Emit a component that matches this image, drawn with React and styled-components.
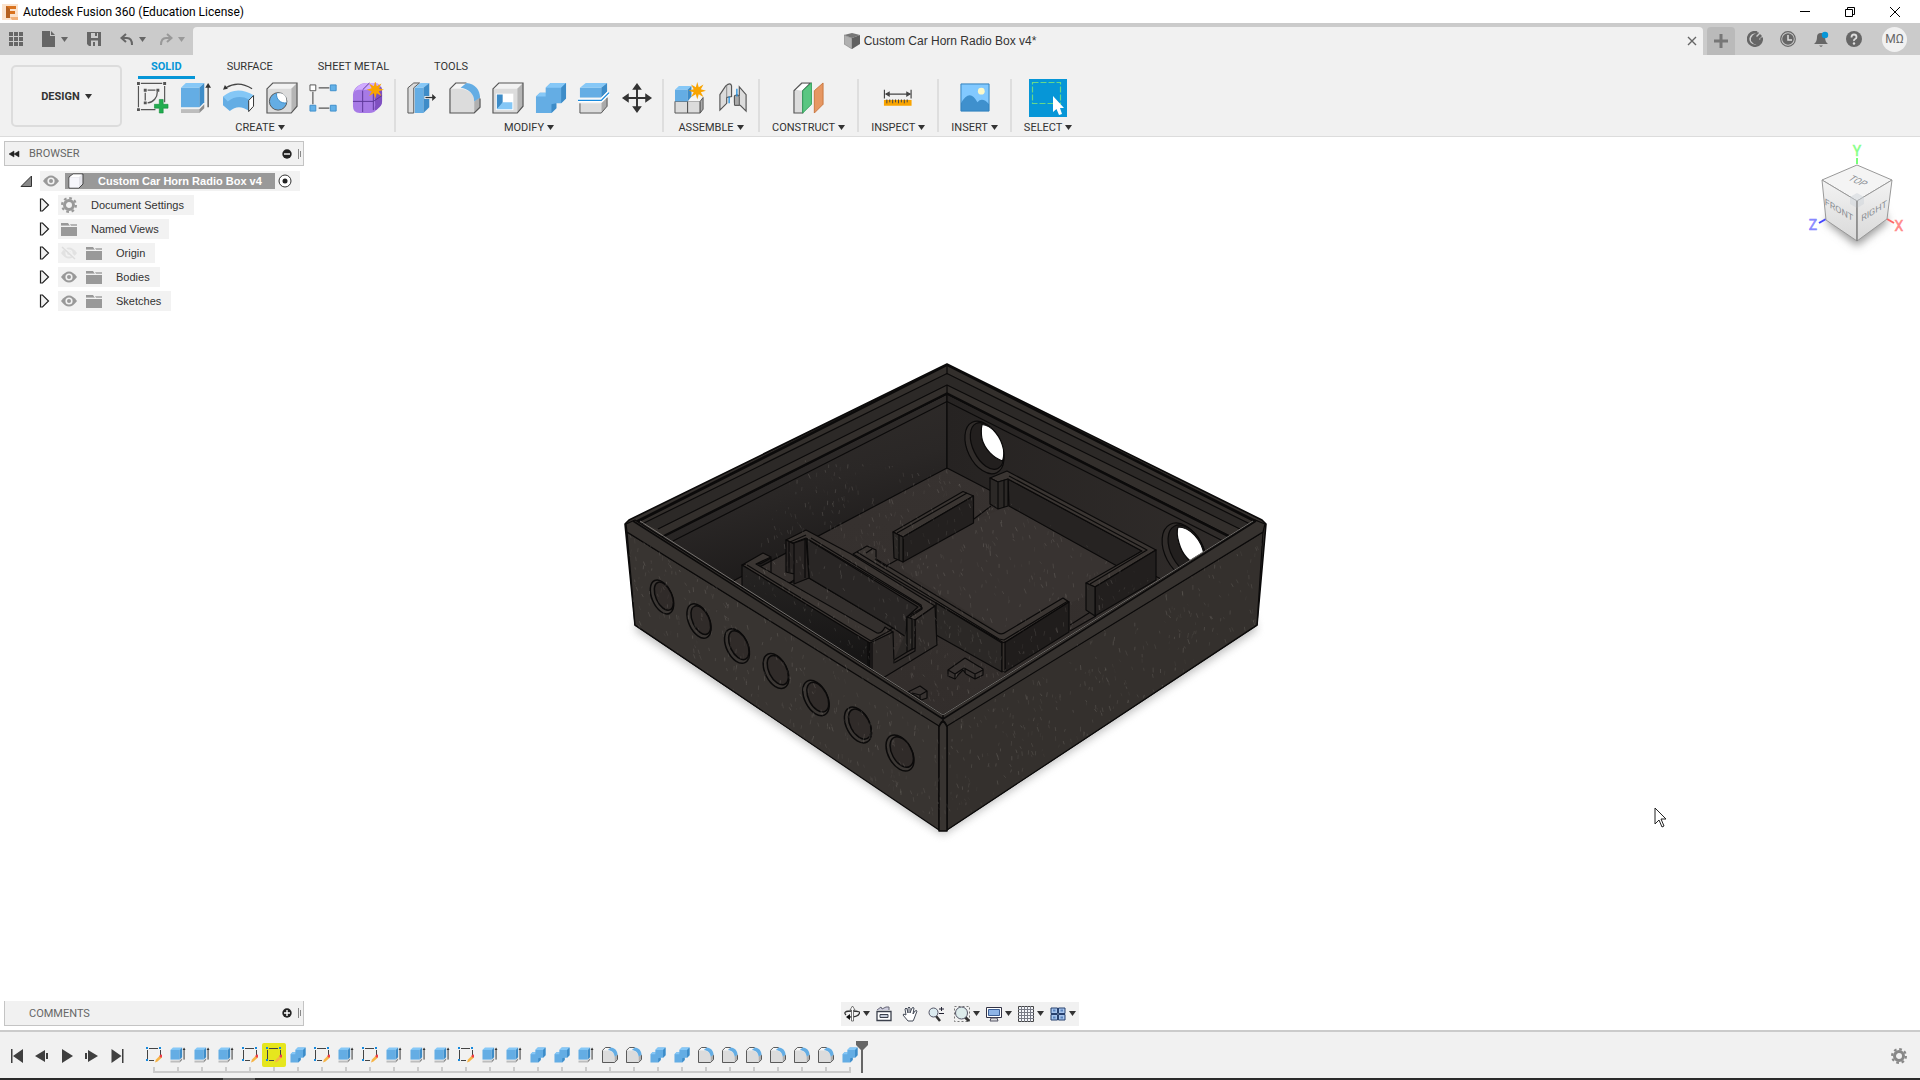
import React from 'react';
import styled, { createGlobalStyle } from 'styled-components';

const starPoints = (cx, cy, outer, inner, count) =>
  Array.from({ length: count * 2 }, (_, i) => {
    const r = i % 2 ? inner : outer;
    const a = (Math.PI * i) / count - Math.PI / 2;
    return `${(cx + r * Math.cos(a)).toFixed(1)},${(cy + r * Math.sin(a)).toFixed(1)}`;
  }).join(' ');

const Icon = ({ size = 32, box = 33, children }) => (
  <svg width={size} height={size} viewBox={`0 0 ${box} ${box}`} fill='none' aria-hidden='true'>
    {children}
  </svg>
);

const Caret = ({ color = '#333' }) => (
  <svg width='7' height='5' viewBox='0 0 7 5' aria-hidden='true'>
    <path d='M0 0h7L3.5 5z' fill={color} />
  </svg>
);

/* ---- ribbon icons ---- */

const SketchIcon = () => (
  <Icon>
    <path d='M4 1.5h22M1.5 4v22M28.5 4v17M4 28.5h15' stroke='#555' strokeWidth='1.2' />
    <path d='M11 8.5h8M8.5 11v8M21 10c0 6-4 11-10 11.5' stroke='#555' strokeWidth='1.3' />
    <path d='M0 0h3v3H0zM27 0h3v3h-3zM0 27h3v3H0zM7 7h3v3H7zM20 7h3v3h-3zM7 20h3v3H7z' fill='#555' />
    <path d='M23 18h4v5h5v4h-5v5h-4v-5h-5v-4h5z' fill='#21ad4f' stroke='#118a3a' strokeWidth='.6' />
  </Icon>
);

const ExtrudeIcon = ({ size }) => (
  <Icon size={size}>
    <path d='M1 6l5-5h19l-5 5z' fill='#86c8f7' />
    <path d='M1 6h19v20H1z' fill='#64ade4' />
    <path d='M20 6l5-5v20l-5 5z' fill='#3d8cc8' />
    <path d='M1 28h19v4H1z' fill='#bdbdbd' />
    <path d='M20 28l5-5v4l-5 5z' fill='#8d8d8d' />
    <path d='M29 4v22' stroke='#333' strokeWidth={size === 16 ? 2 : 1.2} />
    <path d='M29 1l3 5h-6z' fill='#333' />
  </Icon>
);

const RevolveIcon = () => (
  <Icon>
    <path d='M3 6Q16-2 30 7' stroke='#444' strokeWidth='1.2' />
    <path d='M0 8l2-5 3 4z' fill='#333' />
    <path d='M0 15Q14 3 32 14l-5 7Q15 14 5 23L0 15z' fill='#84c7f6' />
    <path d='M0 15l5 5q10-8 22-2v12q-11-8-20 0L0 24z' fill='#64ade4' />
    <path d='M26.5 19l5-5v11l-5 5.5z' fill='#fff' stroke='#333' />
  </Icon>
);

const BoxBody = () => (
  <>
    <path d='M1 7l6-6h25l-6 6z' fill='#f2f2f2' />
    <path d='M26 7l6-6v24l-6 7z' fill='#b5b5b5' />
    <path d='M1 7h25v25H1z' fill='#dcdcdc' />
    <path d='M1 7l6-6h25v24l-6 7H1z' stroke='#555' strokeWidth='1.2' />
  </>
);

const HoleIcon = () => (
  <Icon>
    <BoxBody />
    <circle cx='12.5' cy='20' r='9' fill='#64ade4' stroke='#555' />
    <path d='M11 11.5a8.6 8.6 0 0 0 10 10q1-9-6-10z' fill='#fff' />
    <path d='M11 11.5a8.6 8.6 0 0 0 10 10' stroke='#3d8cc8' />
  </Icon>
);

const PatternIcon = () => (
  <Icon>
    <path d='M10 6h11M4 10v13M10 27h11' stroke='#555' strokeWidth='1.2' />
    <path d='M1 3h6v6H1z' fill='#fff' stroke='#555' />
    <path d='M22 3h6v6h-6zM1 24h6v6H1zM22 24h6v6h-6z' fill='#64b1e8' stroke='#3f8fcb' />
  </Icon>
);

const FormIcon = () => (
  <Icon>
    <path d='M1 13Q1 8 6 4q4-3 8-3h8q9 0 9 9v10q0 4-4 7-4 5-9 5H8q-7 0-7-7z' fill='#a77ae6' />
    <path d='M2 11Q4 3 14 1h8q6 0 6 3-2 4-8 4H7q-4 0-5 3z' fill='#d0abff' />
    <path d='M23 10l7-5q1 2 1 5v10q0 4-5 8-4 3-2-4z' fill='#7f50c0' />
    <path d='M1 20h21l9-6M11 9v22M22 10v19M11 8l7-7' stroke='#5d3799' />
    <polygon points={starPoints(24, 8, 9, 4, 8)} fill='#f9a400' />
  </Icon>
);

const PressPullIcon = () => (
  <Icon>
    <path d='M2 6l6-5h6L8 6v26H2z' fill='#dcdcdc' stroke='#555' />
    <path d='M9 6l6-5h9l-6 5z' fill='#86c8f7' />
    <path d='M9 6h9v26H9z' fill='#64ade4' />
    <path d='M18 6l6-5v25l-6 6z' fill='#3d8cc8' />
    <path d='M19 16h9' stroke='#fff' strokeWidth='3' />
    <path d='M20 16h8' stroke='#333' strokeWidth='1.4' />
    <path d='M27 12.5l4 3.5-4 3.5z' fill='#333' />
  </Icon>
);

const FilletIcon = ({ size }) => (
  <Icon size={size}>
    <path d='M1 7l6-6h11l-6 6z' fill='#f6f6f6' />
    <path d='M1 7h11q14 2 14 13v12H1z' fill='#dcdcdc' />
    <path d='M26 20l6-6v12l-6 6z' fill='#b0b0b0' />
    <path d='M1 7l6-6h11M32 17v9l-6 6H1V7' stroke='#555' strokeWidth={size === 16 ? 2 : 1.2} />
    <path d='M12 6l6-5c9 1 14 7 14 15l-6 4C26 12 20 7 12 6z' fill='#64ade4' />
  </Icon>
);

const ShellIcon = () => (
  <Icon>
    <BoxBody />
    <path d='M4 12h18v17H4z' fill='#fff' />
    <path d='M5 13h6v10l-6 5z' fill='#3d8cc8' />
    <path d='M5 28l6-7h10v7z' fill='#84c7f6' />
  </Icon>
);

const CombineIcon = ({ size }) => (
  <Icon size={size}>
    <path d='M1 15l4-4h6V6l5-5h16v16l-5 5h-5v5l-5 5H1z' fill='#64ade4' />
    <path d='M1 15l4-4h6v4zM11 6l5-5h16l-5 5z' fill='#86c8f7' />
    <path d='M27 6l5-5v16l-5 5zM17 23l5-1v5l-5 5z' fill='#3d8cc8' />
  </Icon>
);

const SplitIcon = () => (
  <Icon>
    <path d='M2 6l6-5h22l-6 5z' fill='#86c8f7' />
    <path d='M2 6h22v10H2z' fill='#64ade4' />
    <path d='M24 6l6-5v9l-6 6z' fill='#3d8cc8' />
    <path d='M24 22l6-6v9l-6 7z' fill='#aaa' />
    <path d='M2 22h22v10H2z' fill='#dcdcdc' />
    <path d='M2 22v10h22l6-7v-9' stroke='#555' />
    <path d='M0 19h24l8-8' stroke='#fff' strokeWidth='4' />
    <path d='M0 19h24l8-8' stroke='#1689dd' strokeWidth='1.3' />
  </Icon>
);

const MoveIcon = () => (
  <Icon>
    <path d='M16.5 5v23M5 16.5h23' stroke='#333' strokeWidth='2' />
    <path d='M16.5 1l5 7h-10zM16.5 32l5-7h-10zM1 16.5l7-5v10zM32 16.5l-7-5v10z' fill='#333' />
  </Icon>
);

const ComponentIcon = () => (
  <Icon>
    <path d='M1 20h13v12H1zM14 20h13v12H14z' fill='#dcdcdc' stroke='#555' />
    <path d='M14 20l4-4h13l-4 4z' fill='#f6f6f6' />
    <path d='M27 20l3-4v12l-3 4z' fill='#aaa' stroke='#555' />
    <path d='M1 8l4-4h13l-4 4z' fill='#86c8f7' />
    <path d='M1 8h13v12H1z' fill='#64ade4' />
    <path d='M14 8l4-4v11l-4 5z' fill='#3d8cc8' />
    <polygon points={starPoints(24, 9, 9, 4, 8)} fill='#f9a400' />
  </Icon>
);

const JointIcon = () => (
  <Icon>
    <path d='M3 13l6-9q5-4 6 0v11l-5 1v6l-7 7z' fill='#dcdcdc' stroke='#555' strokeWidth='1.2' />
    <path d='M10 4v12' stroke='#888' />
    <path d='M12.5 15v7' stroke='#1689dd' strokeWidth='1.3' />
    <path d='M23 5l7 8v17l-6-6h-5q-1-1-1-3v-6q2-2 5-1z' fill='#dcdcdc' stroke='#555' strokeWidth='1.2' />
    <path d='M18 14q3-2 5 1v9h-5z' fill='#aaa' stroke='#555' />
    <path d='M20.5 7v8' stroke='#1689dd' strokeWidth='1.3' />
  </Icon>
);

const ConstructIcon = () => (
  <Icon>
    <path d='M1 9l8-8h9l-8 8v23H1z' fill='#dcdcdc' stroke='#555' strokeWidth='1.2' />
    <path d='M3 8l7-6h6l-7 7z' fill='#fff' />
    <path d='M10 9l9-8v22l-9 9z' fill='#5ac681' stroke='#33a35d' />
    <path d='M22 9l9-8v22l-9 9z' fill='#e69762' stroke='#c9773f' />
  </Icon>
);

const InspectIcon = () => (
  <Icon>
    <path d='M2.5 8v9M30 8v9M4 12.5h25' stroke='#444' strokeWidth='1.2' />
    <path d='M3 12.5l5-3v6zM30 12.5l-5-3v6z' fill='#444' />
    <path d='M2 18.5h28.5v6H2z' fill='#f9a400' />
    <path d='M5 18v4M8 18v3M11 18v4M14 18v3M17 18v4M20 18v3M23 18v4M26 18v3' stroke='#444' />
  </Icon>
);

const InsertIcon = () => (
  <Icon>
    <path d='M2 2h29v28H2z' fill='#82c9ff' />
    <circle cx='23' cy='9.5' r='3.5' fill='#fbf8c9' />
    <path d='M2 22q9-16 17-1 5-6 12 2v7H2z' fill='#3f90cd' />
    <path d='M2 2h29v28H2z' stroke='#2f80bd' />
  </Icon>
);

const SelectIcon = () => (
  <Icon size={38} box={38}>
    <path d='M3.5 3.5h28v21h-28z' stroke='#67d889' strokeDasharray='6 2' strokeWidth='1.2' />
    <path d='M24 17v16l3.5-3 2.5 6 3-1-2-6h4z' fill='#fff' />
  </Icon>
);

/* ---- header icons ---- */

const AppLogo = () => (
  <Icon size={16} box={16}>
    <path d='M0 0h16v16H0z' fill='#fbe3cd' />
    <path d='M4 2h10v3H8v2h5v3H8v4H4z' fill='#d9731f' />
    <path d='M4 2l4 3v9H4z' fill='#b5601f' />
    <path d='M8 13h8v3h-6z' fill='#f3b27a' />
  </Icon>
);

const GridIcon = () => (
  <Icon size={14} box={14}>
    <path
      d='M0 0h4v4H0zM5 0h4v4H5zM10 0h4v4h-4zM0 5h4v4H0zM5 5h4v4H5zM10 5h4v4h-4zM0 10h4v4H0zM5 10h4v4H5zM10 10h4v4h-4z'
      fill='#666'
    />
  </Icon>
);

const FileIcon = () => (
  <svg width='14' height='16' viewBox='0 0 14 16' aria-hidden='true'>
    <path d='M0 0h8v5h5v11H0zM9 0l4 4H9z' fill='#666' />
  </svg>
);

const SaveIcon = () => (
  <Icon size={14} box={14}>
    <path d='M0 0h14v14H2l-2-2z' fill='#666' />
    <path d='M4 1h7v5H4zM4 8.5h7V14H4z' fill='#cbcbcb' />
    <path d='M8 1h2v3H8zM6 10h2v4H6z' fill='#666' />
  </Icon>
);

const UndoIcon = ({ flip }) => (
  <Icon size={14} box={14}>
    <g transform={flip ? 'matrix(-1 0 0 1 14 0)' : undefined} stroke={flip ? '#999' : '#666'} strokeWidth='2'>
      <path d='M6 2L1.500 6 6 10M2 6h5q5 0 5 7' />
    </g>
  </Icon>
);

const DocCube = () => (
  <Icon size={16} box={16}>
    <path d='M0 2l8-2 8 2-8 3z' fill='#777' />
    <path d='M0 2l8 3v11l-8-5z' fill='#b0b0b0' stroke='#777' strokeWidth='.5' />
    <path d='M8 5l8-3v9l-8 5z' fill='#606060' />
  </Icon>
);

const ExtensionIcon = () => (
  <Icon size={16} box={16}>
    <path d='M10 1.500a6.800 6.800 0 1 0 4.500 5' stroke='#666' strokeWidth='2.6' />
    <path d='M4 10V7l2-3 5-3 1 1-3 3 1 1 3-3 2 2-3 3 1 1 3-2v2l-4 4H7z' fill='#666' />
  </Icon>
);

const ClockIcon = () => (
  <Icon size={16} box={16}>
    <circle cx='8' cy='8' r='7.3' stroke='#666' strokeWidth='1.2' />
    <circle cx='8' cy='8' r='5.8' fill='#666' />
    <path d='M8 4v5h4' stroke='#ddd' strokeWidth='1.5' />
  </Icon>
);

const BellIcon = () => (
  <Icon size={16} box={16}>
    <path d='M1 13q3-2 3-7 0-4 4-4t4 4q0 5 3 7zM6 14.500h4L8 16z' fill='#666' />
    <circle cx='12' cy='4' r='3.2' fill='#0696d7' />
  </Icon>
);

const HelpIcon = () => (
  <Icon size={16} box={16}>
    <circle cx='8' cy='8' r='8' fill='#666' />
    <path d='M5.500 6.500q0-3 2.500-3t2.500 2.500q0 1.300-1.400 2T8 10' stroke='#ddd' strokeWidth='1.8' />
    <circle cx='8' cy='12.5' r='1.2' fill='#ddd' />
  </Icon>
);

/* ---- browser tree icons ---- */

const Eye = ({ off }) => (
  <Icon size={16} box={16}>
    <path d='M0 8q8-11 16 0-8 11-16 0z' fill={off ? '#e2e2e2' : '#999'} />
    <circle cx='8' cy='8' r='3.6' fill='#f2f2f2' />
    <circle cx='8' cy='8' r='2' fill={off ? '#e2e2e2' : '#999'} />
    {off && <path d='M2 2l13 12' stroke='#f2f2f2' strokeWidth='3' />}
    {off && <path d='M1 2l13 12' stroke='#ddd' strokeWidth='1.5' />}
  </Icon>
);

const Folder = () => (
  <Icon size={16} box={16}>
    <path d='M0 2h7l2 3H0zM0 6h16v9H0z' fill='#999' />
    <path d='M9 3h7v2h-6z' fill='#b5b5b5' />
    <path d='M0 5h9' stroke='#f2f2f2' strokeWidth='.8' />
  </Icon>
);

const Gear = ({ color = '#999' }) => (
  <Icon size={16} box={16}>
    <circle cx='8' cy='8' r='4.5' stroke={color} strokeWidth='3' />
    <circle cx='8' cy='8' r='6.9' stroke={color} strokeWidth='2.2' strokeDasharray='2.7 2.719' />
  </Icon>
);

const Expander = () => (
  <Icon size={14} box={14}>
    <path d='M1.5 1h2l6 6-6 6h-2z' fill='#f1f1f1' stroke='#222' strokeWidth='1.2' />
  </Icon>
);

const RootExpander = () => (
  <Icon size={12} box={12}>
    <path d='M1 11.5L11.5 1v10.5z' fill='#888' stroke='#333' />
  </Icon>
);

const BodyCube = () => (
  <Icon size={16} box={16}>
    <path d='M1 4l4-3h10v10l-4 4H1z' fill='#e4e4ea' stroke='#444' />
    <path d='M1.5 4.5H11v10H1.500z' fill='#f6f6fb' />
    <path d='M2 4l3-2.500h9L11 4z' fill='#fff' />
  </Icon>
);

const RadioDot = () => (
  <Icon size={14} box={14}>
    <circle cx='7' cy='7' r='6' fill='#fff' stroke='#333' />
    <circle cx='7' cy='7' r='2.5' fill='#222' />
  </Icon>
);

const Grip = () => (
  <Icon size={10} box={10}>
    <path d='M6.5 0v10M8.5 2v6' stroke='#888' />
  </Icon>
);

const Toggle = ({ plus }) => (
  <Icon size={10} box={10}>
    <circle cx='5' cy='5' r='4.7' fill='#222' />
    <path d={plus ? 'M2 5h6M5 2v6' : 'M2 5h6'} stroke='#fff' strokeWidth='1.4' />
  </Icon>
);

/* ---- navigation bar icons ---- */

const OrbitIcon = () => (
  <Icon size={16} box={16}>
    <path d='M2 9Q-2 5 8 5t7 3q-1 3-10 3' stroke='#333' strokeWidth='1.3' />
    <path d='M2 11l4-3v6z' fill='#111' />
    <path d='M7.500 15V4H6l2.500-4L11 4H9.500v11z' fill='#fff' stroke='#555' strokeWidth='.8' />
  </Icon>
);

const LookAtIcon = () => (
  <Icon size={16} box={16}>
    <path d='M1 5.500h14v9H1z' fill='#fff' stroke='#3b404c' strokeWidth='1.3' />
    <path d='M4 8.500h8v3H4z' fill='#c3cad6' stroke='#3b404c' />
    <path d='M1 4l4-3 1 2 4-2 3 0v3' stroke='#667' fill='#ccd' />
  </Icon>
);

const PanIcon = () => (
  <Icon size={16} box={16}>
    <path
      d='M6 15L1 9q0-2 3 0L3 3q1-2 2 0l1 4V2q1-2 2 0v5l2-5q1-1 2 0l-1 6 2-3q2-1 2 0l-3 8-1 2z'
      fill='#fff'
      stroke='#454b58'
    />
  </Icon>
);

const ZoomIcon = () => (
  <Icon size={16} box={16}>
    <path d='M8 10l4 5' stroke='#333' strokeWidth='2.5' />
    <circle cx='5.5' cy='6.5' r='4.5' fill='#dcebf0' stroke='#556' />
    <path d='M11 3h5M13.500 1v4M11 7.500h5' stroke='#223' />
  </Icon>
);

const FitIcon = () => (
  <Icon size={16} box={16}>
    <path d='M.5.5h15v15H.5z' stroke='#777' strokeDasharray='2 2' />
    <path d='M11 11l4 4' stroke='#333' strokeWidth='3' />
    <circle cx='7.5' cy='7' r='6' fill='#dcebeb' stroke='#556' />
  </Icon>
);

const DisplayIcon = () => (
  <Icon size={16} box={16}>
    <path d='M.5 1.500h15v10H.5z' fill='#fff' stroke='#334' />
    <path d='M2.500 3.500h11v6h-11z' fill='#8eb4e6' stroke='#3c5f96' />
    <path d='M5 12h6l1 3H4z' fill='#ddd' stroke='#556' />
  </Icon>
);

const GridsIcon = () => (
  <Icon size={16} box={16}>
    <path d='M.5.5h15v15H.5z' fill='#f4f6fa' stroke='#444' />
    <path d='M3.500 0v16M6.500 0v16M9.500 0v16M12.500 0v16M0 3.500h16M0 6.500h16M0 9.500h16M0 12.500h16' stroke='#777a85' />
  </Icon>
);

const ViewportsIcon = () => (
  <Icon size={16} box={16}>
    <path d='M1 2h6.500v5.500H1zM8.500 2H15v5.500H8.500zM1 8.500h6.500V14H1zM8.500 8.500H15V14H8.500z' fill='#a9c6ee' stroke='#27406e' />
    <path d='M3 4.500h2.500M10.500 4.500H13M3 11.500h2.500M10.500 11.500H13' stroke='#5b83bd' strokeWidth='2' />
  </Icon>
);

/* ---- timeline icons ---- */

const SketchStep = () => (
  <Icon size={16} box={16}>
    <path d='M3 1.500h9M1.500 3v9M14.500 3v5M3 13.500h5' stroke='#444' />
    <path d='M0 0h2v2H0zM13 0h2v2h-2zM0 12h2v2H0z' fill='#1689dd' />
    <path d='M9 15.500l1-3 4-4 2 2-4.500 4z' fill='#f7b445' />
    <circle cx='15' cy='9' r='1.5' fill='#ef3d4a' />
  </Icon>
);

const stepIcons = {
  sketch: () => <SketchStep />,
  extrude: () => <ExtrudeIcon size={16} />,
  combine: () => <CombineIcon size={16} />,
  fillet: () => <FilletIcon size={16} />
};

const steps =
  'sketch extrude extrude extrude sketch sketch combine sketch extrude sketch extrude extrude extrude sketch extrude extrude combine combine extrude fillet fillet combine combine fillet fillet fillet fillet fillet fillet combine'.split(
    ' '
  );

const playIcons = [
  ['Go to start', 'M2 1v14h1.500V1zM14 1v14L4 8z'],
  ['Step back', 'M11 2v12L1 8zM12 5h2v6h-2z'],
  ['Play', 'M3 1l11 7-11 7z'],
  ['Step forward', 'M4 2v12l10-6zM1 5h2v6H1z'],
  ['Go to end', 'M13 1v14h1.500V1zM2.500 1v14l10-7z']
];

/* ---- model ---- */

const frontHoles = [
  [662, 597],
  [699, 621],
  [737, 646],
  [776, 671],
  [816, 698],
  [858, 725],
  [900, 753]
];

// fixed seed, so the grain stays the same between renders
const grain = (count, seed) => {
  let s = seed;
  const next = () => {
    s = (s * 16807) % 2147483647;
    return s / 2147483647;
  };
  return Array.from({ length: count }, () => [
    625 + next() * 640,
    400 + next() * 430,
    next() * 3 - 1,
    2 + next() * 3,
    0.04 + next() * 0.2
  ]);
};

const Model = () => (
  <g strokeLinejoin='round' stroke='#0b0a0a' strokeWidth='1.2'>
    <defs>
      <linearGradient id='wallLeft' x1='0' y1='0' x2='.35' y2='1'>
        <stop offset='0' stopColor='#36322f' />
        <stop offset='.6' stopColor='#2a2726' />
        <stop offset='1' stopColor='#181616' />
      </linearGradient>
      <linearGradient id='wallRight' x1='0' y1='0' x2='1' y2='0'>
        <stop offset='0' stopColor='#262322' />
        <stop offset='1' stopColor='#312d2b' />
      </linearGradient>
      <linearGradient id='floor' x1='0' y1='0' x2='0' y2='1'>
        <stop offset='0' stopColor='#373230' />
        <stop offset='1' stopColor='#322d2b' />
      </linearGradient>
      <linearGradient id='dark' x1='0' y1='0' x2='0' y2='1'>
        <stop offset='0' stopColor='#262423' />
        <stop offset='1' stopColor='#121111' />
      </linearGradient>
      <filter id='shadow' x='-10%' y='-10%' width='120%' height='120%'>
        <feGaussianBlur stdDeviation='4' />
      </filter>
      <clipPath id='inside'>
        <path d='M635 521L947 364l311 157L943 714z' />
      </clipPath>
      <clipPath id='shell'>
        <path d='M627 532L940 722h8l315-190-7 93-311 204L635 626zM800 460l150 10 200 110-206 130-200-130z' />
      </clipPath>
    </defs>

    <path d='M635 630L943 835l314-205-20-60H650z' fill='#888' stroke='none' opacity='.55' filter='url(#shadow)' />
    <path d='M625 524l4-4L947 364l315 156 4 4-9 101-311 205h-5L635 625z' fill='#36322f' strokeWidth='1.6' />

    <g clipPath='url(#inside)'>
      <path d='M947 467L640 628l303 110 320-110z' fill='url(#floor)' />
      <path d='M947 364v104L735 580l-60 40-45-100z' fill='url(#wallLeft)' />
      <path d='M947 364v104l210 109 40 20 65-76z' fill='url(#wallRight)' />
      <path d='M947 364L630 522l32 15 285-143zM947 364l316 158-33 14-283-142z' fill='#332f2c' />
      <path d='M947 374L642 524l16 5 289-144zM947 374l303 150-10 4-293-143z' fill='#2c2927' stroke='none' />
      <g fill='none'>
        <path d='M635 522l312-158 311 158' strokeWidth='4' />
        <path d='M642 524l305-150.500L1250 524M658 529l289-144 293 144M673 541l274-139.500L1223 541' />
        <path d='M662 537l285-143.500L1230 537' strokeWidth='2.5' />
      </g>

      <g>
        <ellipse cx='984.5' cy='447.5' rx='17' ry='28' transform='rotate(-26 984.5 447.5)' fill='#302c2a' />
        <ellipse cx='987' cy='446' rx='14' ry='25' transform='rotate(-26 987 446)' fill='#221f1e' />
        <path d='M982 424.500c10 1 19 12 21.500 25 .5 5 0 9-1 11.500-9-3-18-12-20.500-22-1-6-1-10 0-14.500z' fill='#fff' />
        <ellipse cx='1184' cy='551' rx='19' ry='30' transform='rotate(-28 1184 551)' fill='#302c2a' />
        <ellipse cx='1187' cy='550' rx='16' ry='27' transform='rotate(-28 1187 550)' fill='#221f1e' />
        <path d='M1178 527c12 0 24 13 26 28l-3 12q-17-6-22-24-3-10-1-16z' fill='#fff' />
      </g>

      {/* big tray */}
      <g>
        <path d='M1008 506l120 62-42 28-84 38-103-66 80-50z' fill='#383331' stroke='none' />
        <path d='M886 566l18-10M974 519l17-13M1070 625l22-14M1070 631l26-15' fill='none' />
        <path d='M1008 479l134 72-25 15-108-60z' fill='#262322' />
        <path d='M990 478l17-7 149 79-61 37-9-4 56-32-134-72-10 3z' fill='#3a3532' />
        <path d='M990 478l8 4v27l-8-5zM998 482l10-3v27l-10 3z' fill='#2b2826' />
        <path d='M1004 480v27' />
        <path d='M1095 587l61-37v30l-61 36z' fill='#221f1e' />
        <path d='M1086 583l9 4v29l-9-6z' fill='#2c2927' />
        <path d='M1009 476l138 74-57 34' fill='none' />
        <path d='M893 532l70-40.500 10.500 4.500L903 537z' fill='#3a3532' />
        <path d='M903 537l70.500-41v27L903 562z' fill='#23201f' />
        <path d='M893 532l10 5v25l-9-4z' fill='#2b2826' />
        <path d='M899 535v25M897 533l70-40' />
        <path d='M853 554l14-8 9 4v9l122 74q4 2 8-1l57-34 6 4-65 41z' fill='#3a3532' />
        <path d='M857 552l13 8 129 79 5 1 64-39M866 553l6-4M887 567l-12-8' fill='none' />
        <path d='M936 603l66 40v29l-66-37z' fill='#2b2826' />
        <path d='M1004 643l65-41v30l-64 40z' fill='#201d1c' />
        <path d='M1002 643l3-1v30l-3-1z' fill='#342f2c' />
      </g>

      {/* narrow tray */}
      <g>
        <path d='M809 578l84 50-23 14-85-58z' fill='#332f2d' />
        <path d='M807 539l111 68-11 10-1 20-13-9-84-50z' fill='#292625' />
        <path d='M786 540l20-10 45 24 84 52-20 14-8-3 15-9-3-3-113-67-13 5z' fill='#3a3532' />
        <path d='M811 538l110 67 1 4-12 8M790 542l16-7' fill='none' />
        <path d='M786 540l8 4v30l-8-2zM794 543l12-4 3 39-15 6z' fill='#282423' />
        <path d='M789 542v30M805 540v38M778 578l10 6 6-4M757 562q2 3 5 1l9-5v16' fill='none' />
        <path d='M742 565l21-12 8 4-15 7 121 69q5 1 8-6l8 5-23 12z' fill='#3a3532' />
        <path d='M747 565l124 76 20-11M742 565l4-1' fill='none' />
        <path d='M742 565l128 78v40L742 600z' fill='url(#dark)' />
        <path d='M870 643l23-11 1 31 21-12v-31l20-14 2 39-54 33-13 12z' fill='#302c2a' />
        <path d='M907 617l8 3v28l-8 4zM872 643v34M868 642v32M912 619v30l-18 11' fill='#2b2826' />
      </g>

      <path d='M948 670l17-12 18 11v6l-8 4-9-5-3-4-4 4-4 5-7-3z' fill='#383331' />
      <path d='M948 670l7 4 9-6 11 6 8-4M955 674v5M975 674v5M965 668v5' fill='none' />
      <path d='M908 692l12-6 7 5v7l-6 2-5-4z' fill='#383331' />
      <path d='M920 700v-5l7-4M912 693l8 2' fill='none' />
    </g>

    {/* outer faces */}
    <path d='M627 532l312 193v105L635 625z' fill='#383431' />
    <path d='M947 725l316-193-6 93-310 205z' fill='#34302d' />
    <path d='M939 727q4-10 8 0v104h-8z' fill='#383431' strokeWidth='1.5' />
    <path d='M626 524l9-4 308 195 312-195 10 4-2 8-316 194q-4-10-8 0L627 532z' fill='#36322f' />
    <path d='M640 521l303 194 310-194' fill='none' stroke='#8a8783' strokeWidth='.8' />
    <path d='M633 521l310 198 313-198M943 715v7' fill='none' strokeWidth='1.5' />

    {frontHoles.map(([x, y], i) => {
      const rx = 10 + i * 0.3;
      const ry = 18 + i * 0.25;
      return (
        <g key={x} transform={`rotate(${-24 - i * 0.8} ${x} ${y})`} strokeWidth='1.5'>
          <ellipse cx={x} cy={y} rx={rx} ry={ry} fill='#3b3734' />
          <ellipse cx={x + 2} cy={y} rx={rx - 2} ry={ry - 3} fill='#302b29' />
        </g>
      );
    })}

    <g clipPath='url(#shell)' stroke='#bdb7b0' strokeWidth='.8'>
      {grain(2800, 77).map(([x, y, dx, dy, o], i) => (
        <path key={i} d={`M${x.toFixed(1)} ${y.toFixed(1)}l${dx.toFixed(1)} ${dy.toFixed(1)}`} opacity={o.toFixed(2)} />
      ))}
    </g>
  </g>
);

const ViewCube = () => (
  <CubeSvg viewBox='1805 141 110 115' role='img' aria-label='View cube'>
    <defs>
      <filter id='cubeShadow' x='-30%' y='-30%' width='160%' height='160%'>
        <feGaussianBlur stdDeviation='4' />
      </filter>
      <linearGradient id='cubeFace' x1='0' y1='0' x2='0' y2='1'>
        <stop offset='0' stopColor='#f3f3f3' />
        <stop offset='1' stopColor='#d9d9d9' />
      </linearGradient>
    </defs>
    <path d='M1826 222l31 24 31-24-10-20h-40z' fill='#999' filter='url(#cubeShadow)' />
    <path d='M1857 164v-6' stroke='#7f7' strokeWidth='2' />
    <path d='M1826 219l-7 4' stroke='#44f' strokeWidth='2' />
    <path d='M1887 219l7 4' stroke='#f66' strokeWidth='2' />
    <g stroke='#999' strokeWidth='1'>
      <path d='M1857 165l35 15-35 21-35-21z' fill='#f4f4f4' />
      <path d='M1822 180l35 21v40l-31-21z' fill='url(#cubeFace)' />
      <path d='M1892 180l-35 21v40l30-22z' fill='url(#cubeFace)' />
    </g>
    <path d='M1850 197l7-4 7 4v7l-7 4-7-4z' fill='#cdd3da' opacity='.5' />
    <path d='M1857 201v40' stroke='#777' />
    <g fill='#8b8f94' fontFamily='Roboto, sans-serif' fontSize='9' textAnchor='middle'>
      <text transform='translate(1839 213) skewY(31)'>FRONT</text>
      <text transform='translate(1874 214) skewY(-31)'>RIGHT</text>
      <text transform='translate(1855 183) rotate(24) skewX(-30)'>TOP</text>
    </g>
    <g fontFamily='Roboto, sans-serif' fontSize='14' textAnchor='middle' strokeWidth='.5'>
      <text x='1857' y='156' fill='#8f8' stroke='#8f8'>Y</text>
      <text x='1813' y='230' fill='#88f' stroke='#88f'>Z</text>
      <text x='1899' y='231' fill='#f88' stroke='#f88'>X</text>
    </g>
  </CubeSvg>
);

/* ---- page data ---- */

const panels = [
  { name: 'CREATE', icons: [['Create sketch', SketchIcon], ['Extrude', ExtrudeIcon], ['Revolve', RevolveIcon], ['Hole', HoleIcon], ['Pattern', PatternIcon], ['Create form', FormIcon]] },
  { name: 'MODIFY', icons: [['Press pull', PressPullIcon], ['Fillet', FilletIcon], ['Shell', ShellIcon], ['Combine', CombineIcon], ['Split body', SplitIcon], ['Move', MoveIcon]] },
  { name: 'ASSEMBLE', icons: [['New component', ComponentIcon], ['Joint', JointIcon]] },
  { name: 'CONSTRUCT', icons: [['Offset plane', ConstructIcon]] },
  { name: 'INSPECT', icons: [['Measure', InspectIcon]] },
  { name: 'INSERT', icons: [['Canvas', InsertIcon]] },
  { name: 'SELECT', icons: [['Select', SelectIcon]], active: true }
];

const tree = [
  { label: 'Document Settings', gear: true },
  { label: 'Named Views' },
  { label: 'Origin', eye: 'off' },
  { label: 'Bodies', eye: 'on' },
  { label: 'Sketches', eye: 'on' }
];

const navTools = [
  ['Orbit', OrbitIcon, true],
  ['Look at', LookAtIcon],
  ['Pan', PanIcon],
  ['Zoom', ZoomIcon],
  ['Fit', FitIcon, true],
  ['Display settings', DisplayIcon, true],
  ['Grid and snaps', GridsIcon, true],
  ['Viewports', ViewportsIcon, true]
];

const App = () => {
  return (
    <Page>
      <GlobalStyle />

      <TitleBar>
        <AppLogo />
        <AppTitle>Autodesk Fusion 360 (Education License)</AppTitle>

        <WindowButton aria-label='Minimize'>
          <Icon size={12} box={12}>
            <path d='M1 5.500h10' stroke='#000' />
          </Icon>
        </WindowButton>
        <WindowButton aria-label='Restore'>
          <Icon size={12} box={12}>
            <path d='M1.500 3.500h7v7h-7zM3.500 3.500v-2h7v7h-2' stroke='#000' />
          </Icon>
        </WindowButton>
        <WindowButton aria-label='Close'>
          <Icon size={12} box={12}>
            <path d='M1 1l10 10M11 1L1 11' stroke='#000' />
          </Icon>
        </WindowButton>
      </TitleBar>

      <TabBar>
        <QuickTools>
          <ToolButton aria-label='Data panel'>
            <GridIcon />
          </ToolButton>
          <ToolButton aria-label='File'>
            <FileIcon />
            <Caret color='#666' />
          </ToolButton>
          <ToolButton aria-label='Save'>
            <SaveIcon />
          </ToolButton>
          <History>
            <ToolButton aria-label='Undo'>
              <UndoIcon />
              <Caret color='#666' />
            </ToolButton>
            <ToolButton aria-label='Redo'>
              <UndoIcon flip />
              <Caret color='#999' />
            </ToolButton>
          </History>
        </QuickTools>

        <DocumentTab>
          <DocumentTitle>
            <DocCube />
            Custom Car Horn Radio Box v4*
          </DocumentTitle>
          <ToolButton aria-label='Close tab'>
            <Icon size={10} box={10}>
              <path d='M1 1l8 8M9 1L1 9' stroke='#666' strokeWidth='1.4' />
            </Icon>
          </ToolButton>
        </DocumentTab>

        <NewTab aria-label='New tab'>
          <Icon size={14} box={14}>
            <path d='M7 0v14M0 7h14' stroke='#777' strokeWidth='3' />
          </Icon>
        </NewTab>

        <Account>
          <ToolButton aria-label='Extensions'>
            <ExtensionIcon />
          </ToolButton>
          <ToolButton aria-label='Job status'>
            <ClockIcon />
          </ToolButton>
          <ToolButton aria-label='Notifications'>
            <BellIcon />
          </ToolButton>
          <ToolButton aria-label='Help'>
            <HelpIcon />
          </ToolButton>
          <Avatar>MΩ</Avatar>
        </Account>
      </TabBar>

      <Ribbon>
        <Workspace>
          DESIGN <Caret />
        </Workspace>

        <RibbonMain>
          <RibbonTabs>
            <RibbonTab $active>SOLID</RibbonTab>
            <RibbonTab>SURFACE</RibbonTab>
            <RibbonTab>SHEET METAL</RibbonTab>
            <RibbonTab>TOOLS</RibbonTab>
          </RibbonTabs>

          <Panels>
            {panels.map(({ name, icons, active }) => (
              <Panel key={name}>
                <PanelIcons>
                  {icons.map(([label, Glyph]) => (
                    <RibbonButton key={label} aria-label={label} $active={active}>
                      <Glyph />
                    </RibbonButton>
                  ))}
                </PanelIcons>
                <PanelLabel>
                  {name} <Caret />
                </PanelLabel>
              </Panel>
            ))}
          </Panels>
        </RibbonMain>
      </Ribbon>

      <Canvas>
        <Scene viewBox='0 137 1920 893' role='img' aria-label='Custom Car Horn Radio Box'>
          <Model />
          <path d='M1655 808v16l4-4 3 7 2-1-3-7h5z' fill='#fff' stroke='#222' />
        </Scene>

        <CanvasTop>
          <Browser>
            <PanelHeader>
              <Icon size={12} box={12}>
                <path d='M6 3v6L1 6zM11 3v6L6 6z' fill='#222' stroke='#222' strokeWidth='.5' />
              </Icon>
              <PanelTitle>BROWSER</PanelTitle>
              <Toggle />
              <Grip />
            </PanelHeader>

            <Tree>
              <RootRow>
                <RootExpander />
                <RootFill>
                  <Eye />
                  <RootName>
                    <BodyCube />
                    Custom Car Horn Radio Box v4
                  </RootName>
                  <RadioDot />
                </RootFill>
              </RootRow>
              {tree.map(({ label, gear, eye }) => (
                <TreeRow key={label}>
                  <Expander />
                  <TreeFill>
                    {eye && <Eye off={eye === 'off'} />}
                    {gear ? <Gear /> : <Folder />}
                    <TreeName>{label}</TreeName>
                  </TreeFill>
                </TreeRow>
              ))}
            </Tree>
          </Browser>

          <ViewCube />
        </CanvasTop>

        <CanvasBottom>
          <Comments>
            <PanelTitle>COMMENTS</PanelTitle>
            <Toggle plus />
            <Grip />
          </Comments>

          <NavBar>
            {navTools.map(([label, Glyph, menu]) => (
              <NavButton key={label} aria-label={label} $menu={menu}>
                <Glyph />
                {menu && <Caret />}
              </NavButton>
            ))}
          </NavBar>
        </CanvasBottom>
      </Canvas>

      <Timeline>
        <Playback>
          {playIcons.map(([label, d]) => (
            <PlayButton key={label} aria-label={label}>
              <Icon size={16} box={16}>
                <path d={d} fill='#3f3f3f' />
              </Icon>
            </PlayButton>
          ))}
        </Playback>

        <Steps>
          {steps.map((step, i) => (
            <Step key={i}>
              <StepButton aria-label={step} $selected={i === 5}>
                {stepIcons[step]()}
              </StepButton>
            </Step>
          ))}
        </Steps>
        <Marker viewBox='0 0 12 32' aria-hidden='true'>
          <path d='M0 0h12v4L7 9v23H5V9L0 4z' fill='#666' />
        </Marker>

        <Settings aria-label='Timeline settings'>
          <Gear color='#888' />
        </Settings>
      </Timeline>

      <Taskbar>
        <TaskbarItem />
      </Taskbar>
    </Page>
  );
};

const GlobalStyle = createGlobalStyle`
  * {
    box-sizing: border-box;
  }

  body {
    margin: 0;
    background-color: #fff;
    color: #333;
    font-family: Roboto, 'Liberation Sans', sans-serif;
    font-size: 11px;
  }

  button {
    padding: 0;
    border: none;
    background: none;
    color: inherit;
    font: inherit;
  }

  svg {
    display: block;
    flex-shrink: 0;
  }
`;

const Page = styled.div`
  display: flex;
  flex-direction: column;

  min-height: 100vh;
`;

const TitleBar = styled.header`
  display: flex;
  align-items: center;

  height: 23px;
  padding: 0 3px 0 2px;
`;

const AppTitle = styled.h1`
  flex: 1;
  margin: 0 0 0 5px;

  color: #000;
  font-size: 12px;
  font-weight: 400;
  line-height: 16px;
`;

const WindowButton = styled.button`
  display: flex;
  align-items: center;
  justify-content: center;

  width: 45px;
  height: 20px;
`;

const TabBar = styled.div`
  display: flex;
  align-items: stretch;

  height: 32px;
  padding-top: 4px;
  background-color: #cbcbcb;
`;

const QuickTools = styled.div`
  display: flex;
  align-items: center;
  gap: 19px;

  width: 193px;
  padding: 0 0 4px 9px;
`;

const History = styled.div`
  display: flex;
  gap: 13px;
`;

const ToolButton = styled.button`
  display: flex;
  align-items: center;
  gap: 5px;
`;

const DocumentTab = styled.div`
  display: flex;
  flex: 1;
  align-items: center;

  padding-right: 6px;
  border-radius: 4px 4px 0 0;
  background-color: #f1f1f1;
`;

const DocumentTitle = styled.div`
  display: flex;
  flex: 1;
  align-items: center;
  justify-content: center;
  gap: 4px;

  font-family: 'Liberation Sans', sans-serif;
  font-size: 12px;
`;

const NewTab = styled.button`
  display: flex;
  align-items: center;
  justify-content: center;

  width: 28px;
  margin-left: 4px;
  border-radius: 4px 4px 0 0;
  background-color: #bababa;
`;

const Account = styled.div`
  display: flex;
  align-items: center;
  gap: 17px;

  padding: 0 13px 4px 12px;
`;

const Avatar = styled.button`
  width: 25px;
  height: 25px;
  margin-left: 3px;
  border-radius: 50%;
  background-color: #f1f1f1;

  color: #666;
  font-size: 12px;
`;

const Ribbon = styled.div`
  display: flex;

  height: 82px;
  border-bottom: 1px solid #dcdcdc;
  background-color: #f1f1f1;
`;

const Workspace = styled.button`
  display: flex;
  align-items: center;
  justify-content: center;
  gap: 5px;

  width: 111px;
  height: 62px;
  margin: 10px 9px 0 11px;
  border: 2px solid #dcdcdc;
  border-radius: 5px;

  font-weight: 700;
`;

const RibbonMain = styled.div`
  flex: 1;
`;

const RibbonTabs = styled.nav`
  display: flex;
  gap: 19px;

  padding-left: 7px;
`;

const RibbonTab = styled.button`
  height: 24px;
  padding: 2px 13px 0;
  border-bottom: 3px solid ${({ $active }) => ($active ? '#0696d7' : 'transparent')};

  color: ${({ $active }) => ($active ? '#0696d7' : '#333')};
  font-weight: ${({ $active }) => ($active ? 700 : 400)};
`;

const Panels = styled.div`
  display: flex;
`;

const Panel = styled.section`
  display: flex;
  flex-direction: column;
  align-items: center;

  height: 53px;
  padding: 0 4px;
  border-right: 2px solid #dedede;

  &:first-child {
    padding: 0 5px 0 0;
  }
  &:last-child {
    border-right: none;
  }
`;

const PanelIcons = styled.div`
  display: flex;
  height: 38px;
`;

const RibbonButton = styled.button`
  display: flex;
  align-items: center;
  justify-content: center;

  width: ${({ $active }) => ($active ? 38 : 43)}px;
  height: 38px;
  background-color: ${({ $active }) => ($active ? '#0696d7' : 'transparent')};
`;

const PanelLabel = styled.button`
  display: flex;
  flex-shrink: 0;
  align-items: center;
  gap: 3px;

  height: 20px;
  padding: 0 8px;
`;

const Canvas = styled.main`
  position: relative;
  display: flex;
  flex: 1;
  flex-direction: column;
  justify-content: space-between;
`;

const Scene = styled.svg`
  position: absolute;
  top: 0;
  left: 0;
  width: 100%;
  height: 100%;
`;

const CanvasTop = styled.div`
  position: relative;
  display: flex;
  align-items: flex-start;
  justify-content: space-between;

  padding: 4px 5px 0 4px;
`;

const Browser = styled.aside`
  width: 300px;
`;

const PanelHeader = styled.div`
  display: flex;
  align-items: center;

  height: 25px;
  padding: 0 1px 0 3px;
  border: 1px solid #c4c4c4;
  background-color: #f1f1f1;
`;

const PanelTitle = styled.h2`
  flex: 1;
  margin: 0;
  padding-left: 9px;

  color: #666;
  font-size: 11px;
  font-weight: 400;
`;

const Tree = styled.div`
  display: flex;
  flex-direction: column;
  gap: 4px;

  padding-top: 5px;
  font-family: 'Liberation Sans', sans-serif;
`;

const RootRow = styled.div`
  display: flex;
  align-items: center;
  gap: 8px;

  padding-left: 16px;
`;

const RootFill = styled.div`
  display: flex;
  flex: 1;
  align-items: center;

  height: 20px;
  margin-right: 4px;
  padding: 0 8px 0 3px;
  background-color: #f2f2f2;
`;

const RootName = styled.div`
  display: flex;
  flex: 1;
  align-items: center;
  gap: 14px;

  height: 16px;
  margin: 0 3px 0 6px;
  padding-left: 3px;
  background-color: #999;

  color: #fff;
  font-weight: 700;
`;

const TreeRow = styled.div`
  display: flex;
  align-items: center;
  gap: 5px;

  padding-left: 35px;
`;

const TreeFill = styled.div`
  display: flex;
  align-items: center;
  gap: 9px;

  height: 20px;
  padding: 0 10px 0 3px;
  background-color: #f2f2f2;
`;

const TreeName = styled.span`
  margin-left: 5px;
`;

const CubeSvg = styled.svg`
  width: 110px;
  height: 115px;
`;

const CanvasBottom = styled.div`
  position: relative;
  display: grid;
  grid-template-columns: 1fr auto 1fr;
  align-items: center;

  padding: 0 4px 4px;
`;

const Comments = styled(PanelHeader)`
  width: 300px;
  padding-left: 15px;
  border-top: none;
`;

const NavBar = styled.div`
  display: flex;
  align-items: center;
  gap: 6px;

  height: 24px;
  padding: 0 3px;
  background-color: #f1f1f1;
`;

const NavButton = styled.button`
  display: flex;
  align-items: center;
  gap: 3px;

  margin-right: ${({ $menu }) => ($menu ? 0 : 4)}px;
`;

const Timeline = styled.footer`
  display: flex;
  align-items: flex-start;

  height: 48px;
  padding: 9px 13px 0 4px;
  border-top: 2px solid #cbcbcb;
  background-color: #f1f1f1;
`;

const Playback = styled.div`
  display: flex;
  padding-top: 3px;
`;

const PlayButton = styled.button`
  display: flex;
  align-items: center;
  justify-content: center;

  width: 25px;
  height: 24px;
`;

const Steps = styled.ol`
  display: flex;

  margin: 2px 0 0 13px;
  padding: 0;
  list-style: none;
`;

const Step = styled.li`
  height: 30px;
  background:
    linear-gradient(#cbcbcb, #cbcbcb) center bottom / 2px 6px no-repeat,
    linear-gradient(#cbcbcb, #cbcbcb) center bottom / 100% 2px no-repeat;

  &:first-child {
    background-position: center bottom, right bottom;
    background-size: 2px 6px, 50% 2px;
  }
  &:last-child {
    background-position: center bottom, left bottom;
    background-size: 2px 6px, 50% 2px;
  }
`;

const StepButton = styled.button`
  display: flex;
  align-items: center;
  justify-content: center;

  width: 24px;
  height: 24px;
  border-radius: 2px;
  background-color: ${({ $selected }) => ($selected ? '#e6e61e' : 'transparent')};
`;

const Marker = styled.svg`
  z-index: 1;
  width: 12px;
  height: 32px;
  margin-left: -6px;
`;

const Settings = styled.button`
  margin: 7px 0 0 auto;
`;

const Taskbar = styled.div`
  height: 2px;
  padding-left: 223px;
  background-color: #2b2b2b;
`;

const TaskbarItem = styled.div`
  width: 32px;
  height: 2px;
  background-color: #666;
`;

export default App;
